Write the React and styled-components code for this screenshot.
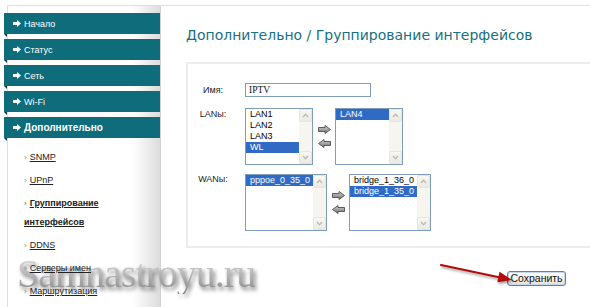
import React from 'react'
import styled, { createGlobalStyle } from 'styled-components'

const GlobalStyle = createGlobalStyle`
  html, body {
    margin: 0;
    padding: 0;
    background: #fff;
  }
  body {
    font-family: 'Liberation Sans', Arial, sans-serif;
  }
`

const Page = styled.div`
  position: relative;
  width: 590px;
  height: 307px;
  overflow: hidden;
  background: #fff;
`

const Frame = styled.div`
  display: flex;
  height: 302px;
  margin: 5px 0 0 7px;
  border-top: 1px solid #dedede;
`

const Sidebar = styled.nav`
  flex: none;
  width: 152px;
  padding-top: 7px;
  border-left: 1px solid #dedede;
  border-right: 1px solid #d2d2d2;
  background: linear-gradient(to right, #fff 0, #fff 82%, #dcdcdc 100%);
`

const MenuItem = styled.div`
  position: relative;
  display: flex;
  align-items: center;
  gap: 3px;
  height: 21px;
  margin: 0 0 5px -4px;
  padding-left: 9px;
  background: #0e6c7b;
  color: #fff;
  font-size: ${({ $active }) => $active ? '10px' : '9px'};
  font-weight: ${({ $active }) => $active ? 700 : 400};

  &::after {
    content: '';
    position: absolute;
    left: 0;
    bottom: -3px;
    border-top: 3px solid #053f49;
    border-left: 3px solid transparent;
  }
`

const MenuIcon = styled.svg`
  width: 8px;
  height: 7px;
  fill: #fff;
`

const SubMenu = styled.ul`
  position: relative;
  z-index: 2;
  list-style: none;
  margin: 0;
  padding: 5px 20px 0 16px;
`

const SubItem = styled.li`
  margin-bottom: 4px;
  line-height: 19px;
  font-size: 9px;
  font-weight: ${({ $current }) => $current ? 700 : 400};
  color: #222;

  a {
    color: inherit;
    text-decoration: underline;
  }
`

const SubArrow = styled.span`
  margin-right: 3px;
  color: #6d8f96;
  font-size: 8px;
`

const Main = styled.main`
  flex: 1;
  min-width: 0;
  padding: 19px 0 0 25px;
`

const Title = styled.h1`
  margin: 0 0 17px;
  height: 20px;
  line-height: 20px;
  font-family: 'DejaVu Sans', Verdana, sans-serif;
  font-size: 14px;
  font-weight: 400;
  color: #17707f;
  white-space: nowrap;
`

const Panel = styled.section`
  margin-right: -12px;
  padding: 19px 0 15px;
  border: 2px solid #ececec;
`

const Row = styled.div`
  display: flex;
  align-items: flex-start;
  margin-top: ${({ $gap }) => $gap || 0}px;
`

const Label = styled.div`
  flex: none;
  width: 50px;
  margin: ${({ $shift }) => $shift || 0}px 7px 0 0;
  line-height: 12px;
  font-size: 9px;
  color: #222;
  text-align: center;
`

const TextInput = styled.div`
  box-sizing: border-box;
  width: 126px;
  height: 14px;
  padding-left: 3px;
  border: 1px solid #7f9db9;
  line-height: 12px;
  font-family: 'Liberation Serif', 'Times New Roman', serif;
  font-size: 9.5px;
  color: #111;
`

const Transfer = styled.div`
  display: flex;
  margin-top: ${({ $offset }) => $offset || 0}px;
`

const ListBox = styled.div`
  box-sizing: border-box;
  display: flex;
  width: ${({ $width }) => $width}px;
  height: 57px;
  border: 1px solid #7f9db9;
  background: #fff;
`

const Options = styled.div`
  flex: 1;
  min-width: 0;
  overflow: hidden;
`

const Option = styled.div`
  height: 11px;
  padding-left: 4px;
  line-height: 11px;
  font-size: 9px;
  white-space: nowrap;
  background: ${({ $selected }) => $selected ? '#316ac5' : 'transparent'};
  color: ${({ $selected }) => $selected ? '#fff' : '#000'};
`

const Scrollbar = styled.div`
  flex: none;
  display: flex;
  flex-direction: column;
  justify-content: space-between;
  width: 13px;
  background: #f6f5f0;
`

const ScrollButton = styled.div`
  box-sizing: border-box;
  display: flex;
  align-items: center;
  justify-content: center;
  height: 13px;
  border: 1px solid #e6e5de;
  border-radius: 2px;
  background: linear-gradient(#f7f7f3, #ebeae3);

  svg {
    width: 7px;
    height: 5px;
    fill: none;
    stroke: #bdbcb4;
    stroke-width: 1.4;
  }
`

const MoveColumn = styled.div`
  display: flex;
  flex-direction: column;
  align-items: center;
  gap: 5px;
  width: ${({ $width }) => $width}px;
  padding-top: 17px;
`

const MoveArrow = styled.svg`
  width: 13px;
  height: 9px;
`

const Actions = styled.div`
  display: flex;
  justify-content: flex-end;
  margin-top: 23px;
  padding-right: 24px;
`

const SaveButton = styled.button`
  box-sizing: border-box;
  width: 59px;
  height: 15px;
  padding: 0;
  border: 1px solid #5a7ea6;
  border-radius: 3px;
  background: linear-gradient(#ffffff, #f0efe8 70%, #dcdad0);
  box-shadow: inset 0 0 0 1px #c9d8ef;
  font-family: 'Liberation Sans', Arial, sans-serif;
  font-size: 10.5px;
  line-height: 13px;
  color: #111;
`

const Watermark = styled.div`
  position: absolute;
  left: 17px;
  top: 254px;
  z-index: 1;
  font-family: 'Liberation Serif', 'Times New Roman', serif;
  font-size: 40px;
  line-height: 40px;
  letter-spacing: -1px;
  color: transparent;
  background: linear-gradient(#e4e4e4, #a0a0a0 65%, #7a7a7a);
  -webkit-background-clip: text;
  background-clip: text;
  filter: drop-shadow(2px 3px 2px rgba(0, 0, 0, 0.55));
  opacity: 0.9;
  pointer-events: none;
`

const Pointer = styled.svg`
  position: absolute;
  left: 430px;
  top: 256px;
  z-index: 3;
  width: 90px;
  height: 30px;
  filter: drop-shadow(1px 2px 1px rgba(0, 0, 0, 0.35));
`

const menu = ['Начало', 'Статус', 'Сеть', 'Wi-Fi', 'Дополнительно']

const submenu = [
  { label: 'SNMP' },
  { label: 'UPnP' },
  { label: 'Группирование интерфейсов', current: true },
  { label: 'DDNS' },
  { label: 'Серверы имен' },
  { label: 'Маршрутизация' },
]

const Arrow = () => (
  <MenuIcon viewBox="0 0 8 7">
    <path d="M0 2h4V0l4 3.5L4 7V5H0z"/>
  </MenuIcon>
)

const Chevron = ({ down }) => (
  <svg viewBox="0 0 7 5">
    <polyline points={down ? '1,1 3.5,3.8 6,1' : '1,4 3.5,1.2 6,4'}/>
  </svg>
)

const List = ({ width, items }) => (
  <ListBox $width={width}>
    <Options>
      {items.map(item => (
        <Option key={item.label} $selected={item.selected}>{item.label}</Option>
      ))}
    </Options>
    <Scrollbar>
      <ScrollButton><Chevron/></ScrollButton>
      <ScrollButton><Chevron down/></ScrollButton>
    </Scrollbar>
  </ListBox>
)

const Move = ({ left }) => (
  <MoveArrow viewBox="0 0 13 9">
    <defs>
      <linearGradient id={left ? 'mvL' : 'mvR'} x1="0" y1="0" x2="0" y2="1">
        <stop offset="0" stopColor="#d6d6d6"/>
        <stop offset="1" stopColor="#6e6e6e"/>
      </linearGradient>
    </defs>
    <path
      transform={left ? 'translate(13 0) scale(-1 1)' : undefined}
      d="M0.5 2.5h6.5V0.5l5.5 4-5.5 4v-2H0.5z"
      fill={`url(#${left ? 'mvL' : 'mvR'})`}
      stroke="#4e4e4e"
      strokeWidth="0.9"
      strokeLinejoin="round"/>
  </MoveArrow>
)

const MoveButtons = ({ width }) => (
  <MoveColumn $width={width}>
    <Move/>
    <Move left/>
  </MoveColumn>
)

const App = () => (
  <Page>
    <GlobalStyle/>
    <Frame>
      <Sidebar>
        {menu.map(item => (
          <MenuItem key={item} $active={item === 'Дополнительно'}>
            <Arrow/>
            <span>{item}</span>
          </MenuItem>
        ))}
        <SubMenu>
          {submenu.map(item => (
            <SubItem key={item.label} $current={item.current}>
              <SubArrow>›</SubArrow>
              <a>{item.label}</a>
            </SubItem>
          ))}
        </SubMenu>
      </Sidebar>

      <Main>
        <Title>Дополнительно / Группирование интерфейсов</Title>
        <Panel>
          <Row>
            <Label $shift={1}>Имя:</Label>
            <TextInput>IPTV</TextInput>
          </Row>
          <Row $gap={1}>
            <Label $shift={10}>LANы:</Label>
            <Transfer $offset={10}>
              <List width={68} items={[
                { label: 'LAN1' },
                { label: 'LAN2' },
                { label: 'LAN3' },
                { label: 'WL', selected: true },
              ]}/>
              <MoveButtons width={22}/>
              <List width={68} items={[{ label: 'LAN4', selected: true }]}/>
            </Transfer>
          </Row>
          <Row $gap={8}>
            <Label>WANы:</Label>
            <Transfer $offset={1}>
              <List width={82} items={[{ label: 'pppoe_0_35_0', selected: true }]}/>
              <MoveButtons width={22}/>
              <List width={82} items={[
                { label: 'bridge_1_36_0' },
                { label: 'bridge_1_35_0', selected: true },
              ]}/>
            </Transfer>
          </Row>
        </Panel>
        <Actions>
          <SaveButton>Сохранить</SaveButton>
        </Actions>
      </Main>
    </Frame>

    <Watermark>Samnastroyu.ru</Watermark>

    <Pointer viewBox="0 0 90 30">
      <line x1="11" y1="9" x2="69" y2="21.2" stroke="#b30a0a" strokeWidth="2" strokeLinecap="round"/>
      <polygon points="82,24 67.3,26.2 69.5,15.8" fill="#b30a0a"/>
    </Pointer>
  </Page>
)

export default App
